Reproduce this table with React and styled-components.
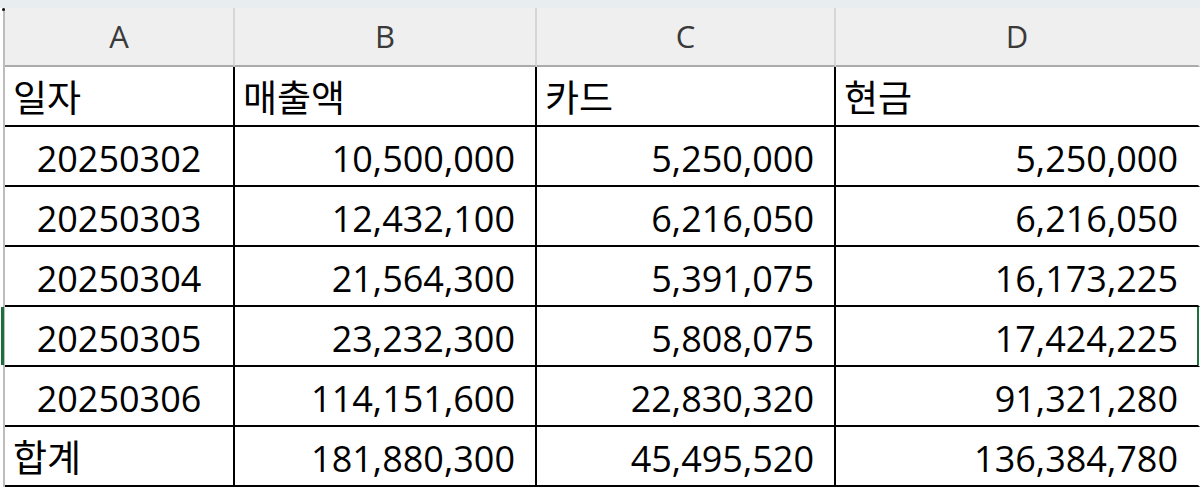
import React from "react";
import styled, { createGlobalStyle } from "styled-components";

const Global = createGlobalStyle`
  html, body { margin: 0; padding: 0; background: #ffffff; }
  body { font-family: "Open Sans", "Noto Sans CJK KR", sans-serif; overflow: hidden; }
  *, *::before, *::after { box-sizing: border-box; }
`;

const Page = styled.div`
  position: relative;
  width: 1200px;
  height: 489px;
  background: #ffffff;
`;

const TopBand = styled.div`
  height: 8px;
  background: #e8eef0;
`;

const Dot = styled.div`
  position: absolute;
  left: 2px;
  top: 8px;
  width: 3px;
  height: 3px;
  border-radius: 50%;
  background: #111;
`;

const Sheet = styled.div`
  margin-left: 3px;
  border-left: 2px solid #bdbdbd;
  display: grid;
  grid-template-columns: 230px 302px 299px 364px;
`;

const ColHead = styled.div`
  height: 59px;
  background: #efefef;
  border-right: 2px solid ${(p) => (p.$last ? "transparent" : "#d6d6d6")};
  border-bottom: 2px solid #ababab;
  display: flex;
  align-items: center;
  justify-content: center;
  font-size: 31px;
  color: #3a3a3a;
  padding-bottom: 1px;
`;

const Cell = styled.div`
  position: relative;
  height: 60px;
  border-right: 2px solid ${(p) => (p.$last ? "transparent" : "#000")};
  border-bottom: 2px solid #000;
  display: flex;
  align-items: center;
  justify-content: ${(p) =>
    p.$align === "center" ? "center" : p.$align === "right" ? "flex-end" : "flex-start"};
  padding: ${(p) =>
    p.$align === "right" ? "4px 20px 0 0" : p.$align === "center" ? "4px 0 0 0" : "0 0 0 8px"};
  font-size: 36px;
  color: #000;
  white-space: nowrap;
  ${(p) => (p.$label ? "font-family: 'Noto Sans CJK KR', sans-serif; font-size: 37px;" : "")}
`;

const ActiveEdge = styled.div`
  position: absolute;
  top: 0;
  bottom: 0;
  width: 2px;
  background: #1f6f3c;
  ${(p) => (p.$side === "left" ? "left: -4px; width: 3px;" : "right: -1px;")}
`;

const headers = ["A", "B", "C", "D"];
const labels = ["일자", "매출액", "카드", "현금"];
const rows = [
  ["20250302", "10,500,000", "5,250,000", "5,250,000"],
  ["20250303", "12,432,100", "6,216,050", "6,216,050"],
  ["20250304", "21,564,300", "5,391,075", "16,173,225"],
  ["20250305", "23,232,300", "5,808,075", "17,424,225"],
  ["20250306", "114,151,600", "22,830,320", "91,321,280"],
];
const total = ["합계", "181,880,300", "45,495,520", "136,384,780"];

export default function App() {
  return (
    <Page>
      <Global />
      <TopBand />
      <Dot />
      <Sheet>
        {headers.map((h, i) => (
          <ColHead key={h} $last={i === 3}>
            {h}
          </ColHead>
        ))}
        {labels.map((l, i) => (
          <Cell key={l} $label $align="left" $last={i === 3}>
            {l}
          </Cell>
        ))}
        {rows.map((r, ri) =>
          r.map((v, ci) => (
            <Cell key={`${ri}-${ci}`} $align={ci === 0 ? "center" : "right"} $last={ci === 3}>
              {ri === 3 && ci === 0 && <ActiveEdge $side="left" />}
              {v}
              {ri === 3 && ci === 3 && <ActiveEdge $side="right" />}
            </Cell>
          ))
        )}
        {total.map((v, ci) => (
          <Cell
            key={`t-${ci}`}
            $label={ci === 0}
            $align={ci === 0 ? "left" : "right"}
            $last={ci === 3}
          >
            {v}
          </Cell>
        ))}
      </Sheet>
    </Page>
  );
}
